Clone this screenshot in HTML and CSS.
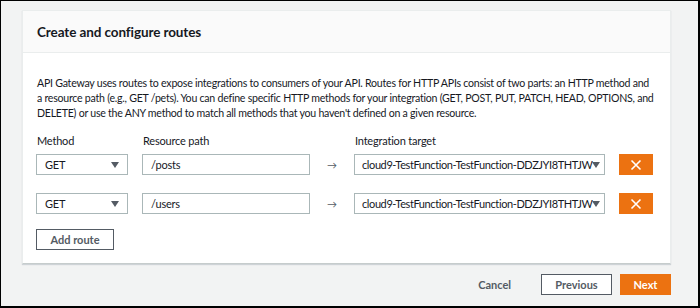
FILE: index.html
```html
<!DOCTYPE html>
<html lang="en">
<head>
  <meta charset="UTF-8"/>
  <title>Create and configure routes</title>
  <link rel="stylesheet" href="styles.css">
</head>
<body>
  <div class="frame">

    <!-- Routes card -->
    <div class="card">
      <div class="card-header">
        <h2>Create and configure routes</h2>
      </div>
      <div class="card-body">
        <p class="intro">API Gateway uses routes to expose integrations to consumers of your API. Routes for HTTP APIs consist of two parts: an HTTP method and<br>
          a resource path (e.g., GET /pets). You can define specific HTTP methods for your integration (GET, POST, PUT, PATCH, HEAD, OPTIONS, and DELETE) or use the ANY method to match all methods that you haven't defined on a given resource.</p>

        <div class="routes">
          <div class="label">Method</div>
          <div class="label">Resource path</div>
          <div></div>
          <div class="label">Integration target</div>
          <div></div>

          <div class="select">GET<span class="caret"></span></div>
          <div class="input">/posts</div>
          <div class="arrow">&rarr;</div>
          <div class="select target">cloud9-TestFunction-TestFunction-DDZJYI8THTJW<span class="caret"></span></div>
          <button class="remove"><svg width="12" height="12" viewBox="0 0 12 12"><path d="M1.5 1.5l9 9M10.5 1.5l-9 9" stroke="#fff" stroke-width="1.6" fill="none"/></svg></button>

          <div class="select">GET<span class="caret"></span></div>
          <div class="input">/users</div>
          <div class="arrow">&rarr;</div>
          <div class="select target">cloud9-TestFunction-TestFunction-DDZJYI8THTJW<span class="caret"></span></div>
          <button class="remove"><svg width="12" height="12" viewBox="0 0 12 12"><path d="M1.5 1.5l9 9M10.5 1.5l-9 9" stroke="#fff" stroke-width="1.6" fill="none"/></svg></button>
        </div>

        <button class="btn add">Add route</button>
      </div>
    </div>

    <!-- Wizard footer -->
    <div class="footer">
      <button class="btn link">Cancel</button>
      <button class="btn">Previous</button>
      <button class="btn primary">Next</button>
    </div>

  </div>
</body>
</html>
```

FILE: styles.css
```css
:root {
  --text: #16191f;
  --gray: #545b64;
  --border: #aab7b8;
  --orange: #ec7211;
  --page: #f2f3f3;
}
* { margin:0; padding:0; box-sizing:border-box }
body {
  font-family:Lato,'Noto Sans',sans-serif;
  font-size:11px;
  letter-spacing:-.2px;
  color:var(--text);
  background:#000;
}

.frame {
  width:700px; height:308px;
  border-style:solid; border-color:#000;
  border-width:1px 2px 2px 1px;
  background:var(--page);
  padding:9px 0 0 21px;
}

/* Card */
.card {
  width:649px;
  background:#fff;
  border:1px solid #eaeded;
  border-bottom-color:#c6cccc;
  box-shadow:0 1px 1px rgba(0,31,63,.15);
}
.card-header {
  background:#fafafa;
  border-bottom:1px solid #eaeded;
  height:42px;
  display:flex; align-items:center;
  padding:0 14px;
}
.card-header h2 { font-size:13.5px; font-weight:700; letter-spacing:-.1px }
.card-body { padding:23px 10px 13px 13px }
.intro {
  font-size:10.6px; letter-spacing:-.25px;
  line-height:15px; padding-left:1px;
}

/* Route rows */
.routes {
  display:grid;
  grid-template-columns:92px 168px 16px 251px 34px;
  column-gap:14px;
  row-gap:18px;
  margin-top:12px;
}
.label { line-height:15px; padding-left:1px; margin-bottom:-12px }
.select, .input {
  height:21px; border:1px solid var(--border);
  display:flex; align-items:center;
  padding:0 8px; background:#fff;
}
.select { justify-content:space-between }
.target { padding:0 6px 0 7px; white-space:nowrap; letter-spacing:-.4px }
.caret {
  width:0; height:0;
  border-left:4px solid transparent; border-right:4px solid transparent;
  border-top:6px solid var(--gray);
}
.arrow { display:flex; align-items:center; justify-content:center; color:var(--gray); font-size:10px }
.remove {
  height:21px; border:none; background:var(--orange);
  display:flex; align-items:center; justify-content:center;
}

/* Buttons */
.btn {
  font-family:inherit; font-size:11px; font-weight:700; letter-spacing:0;
  height:21px; padding:0 14px;
  border:1px solid var(--gray); background:#fff; color:var(--gray);
}
.add { margin-top:15px; width:78px; padding:0 }
.footer {
  width:649px;
  display:flex; justify-content:flex-end; gap:8px;
  margin-top:10px;
}
.footer .btn:nth-child(2) { width:71px; padding:0 }
.link { border:none; background:none; margin-right:6px; padding:0 16px }
.primary { background:var(--orange); border-color:var(--orange); color:#fff; width:51px; padding:0 }
```
